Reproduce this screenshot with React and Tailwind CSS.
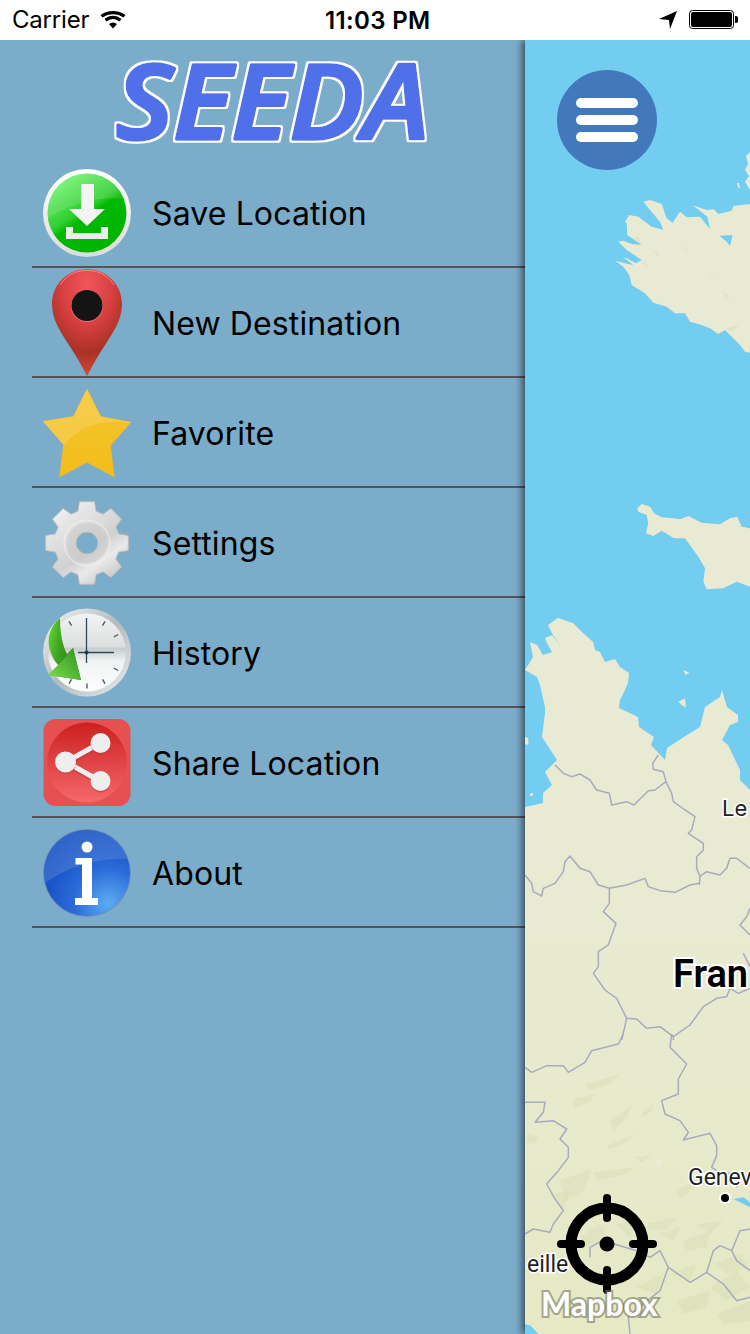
const SANS = "font-['Inter','Liberation_Sans',sans-serif]";

function SaveIcon() {
  return (
    <svg width="88" height="88" viewBox="0 0 88 88">
      <defs>
        <linearGradient id="saveRim" x1="0" y1="0" x2="0" y2="1"><stop offset="0" stopColor="#ffffff" /><stop offset="1" stopColor="#dcdcdc" /></linearGradient>
        <linearGradient id="saveFill" x1="0.15" y1="0.05" x2="0.7" y2="0.9"><stop offset="0" stopColor="#73f673" /><stop offset="0.5" stopColor="#2fce2f" /><stop offset="0.6" stopColor="#00b900" /><stop offset="1" stopColor="#00b400" /></linearGradient>
        <clipPath id="saveClip"><circle cx="44" cy="44" r="39.5" /></clipPath>
      </defs>
      <circle cx="44" cy="44" r="44" fill="url(#saveRim)" />
      <circle cx="44" cy="44" r="39.5" fill="url(#saveFill)" />
      <path d="M4 50 C22 38 50 26 84 30 L84 0 L4 0Z" fill="#ffffff" opacity="0.12" clipPath="url(#saveClip)" />
      <path d="M38 15 H51 V40 H62 L44 57 L26 40 H38Z" fill="#f4f4f4" />
      <path d="M23 58 H30 V64 H58 V58 H65 V70 H23Z" fill="#ececec" />
    </svg>
  );
}

function PinIcon() {
  return (
    <svg width="72" height="108" viewBox="-1 0 72 108">
      <defs>
        <radialGradient id="pinGlow" cx="0.5" cy="0.16" r="0.8"><stop offset="0" stopColor="#f2565c" /><stop offset="0.45" stopColor="#d83f40" /><stop offset="0.78" stopColor="#a93226" /><stop offset="1" stopColor="#cf4530" /></radialGradient>
      </defs>
      <path d="M35 0 C54 0 70 15 70 35 C70 50 62 62 55 73 C47 85 40 97 35 107 C30 97 23 85 15 73 C8 62 0 50 0 35 C0 15 16 0 35 0Z" fill="url(#pinGlow)" />
      <path d="M8 16 C16 4 26 1.500 35 1.500 C44 1.500 54 4 62 16" fill="none" stroke="#f7a0a0" strokeWidth="1" opacity="0.7" />
      <circle cx="35" cy="37" r="16" fill="#e8a0a0" opacity="0.6" />
      <circle cx="35" cy="36.500" r="15.500" fill="#141414" />
    </svg>
  );
}

function StarIcon() {
  const pts = "45,0 59,28 90,34 69,58 73,90 45,75 17,90 21,57 0,33 31,28";
  return (
    <svg width="90" height="90" viewBox="0 0 90 90">
      <defs>
        <linearGradient id="starFill" x1="0" y1="0" x2="0" y2="1"><stop offset="0" stopColor="#f6c62f" /><stop offset="1" stopColor="#f2bd1b" /></linearGradient>
        <clipPath id="starClip"><polygon points={pts} /></clipPath>
      </defs>
      <polygon points={pts} fill="url(#starFill)" stroke="#eeb92c" strokeWidth="0.6" />
      <path d="M0 0 H90 V35 C60 30 35 38 20 60 L0 60Z" fill="#f8dc8a" opacity="0.32" clipPath="url(#starClip)" />
    </svg>
  );
}

function GearIcon() {
  const parts = [];
  for (let i = 0; i < 8; i++) {
    const a = (i * Math.PI) / 4 - Math.PI / 2;
    const p = (r, d) => `${(43 + r * Math.cos(a + d)).toFixed(2)} ${(43 + r * Math.sin(a + d)).toFixed(2)}`;
    parts.push(`${i === 0 ? "M" : "L"}${p(33, -0.28)} L${p(42, -0.18)} L${p(42, 0.18)} L${p(33, 0.28)}`);
  }
  const d = `${parts.join(" ")} Z M43 32 A11 11 0 1 0 43 54 A11 11 0 1 0 43 32 Z`;
  return (
    <svg width="86" height="86" viewBox="0 0 86 86">
      <defs>
        <linearGradient id="gearFill" x1="0.1" y1="0" x2="0.8" y2="1"><stop offset="0" stopColor="#f4f4f4" /><stop offset="0.6" stopColor="#d0d0d0" /><stop offset="0.75" stopColor="#eaeaea" /><stop offset="1" stopColor="#c2c2c2" /></linearGradient>
      </defs>
      <path d={d} fill="url(#gearFill)" fillRule="evenodd" stroke="#bcbcbc" strokeWidth="1" strokeLinejoin="round" />
      <circle cx="43" cy="43" r="23" fill="none" stroke="#f2f2f2" strokeWidth="1" />
      <path d="M43 23 A20 20 0 0 1 63 43 A20 20 0 0 1 43 63 A20 20 0 0 1 23 43 A20 20 0 0 1 43 23 Z M43 32 A11 11 0 1 0 43 54 A11 11 0 1 0 43 32 Z" fill="#c8c8c8" fillRule="evenodd" opacity="0.55" />
    </svg>
  );
}

function ClockIcon() {
  const ticks = [30, 60, 120, 150, 180, 210, 240, 300, 330].map((deg) => {
    const a = (deg * Math.PI) / 180;
    return { x1: 44 + 31 * Math.sin(a), y1: 44 - 31 * Math.cos(a), x2: 44 + 36 * Math.sin(a), y2: 44 - 36 * Math.cos(a), k: deg };
  });
  return (
    <svg width="88" height="90" viewBox="0 0 88 90">
      <defs>
        <linearGradient id="clockRim" x1="0" y1="0" x2="1" y2="1"><stop offset="0" stopColor="#f7f7f7" /><stop offset="0.5" stopColor="#b4b9bb" /><stop offset="1" stopColor="#e6f0f4" /></linearGradient>
        <linearGradient id="clockFace" x1="0" y1="0" x2="0" y2="1"><stop offset="0" stopColor="#f3f4f4" /><stop offset="0.42" stopColor="#dcdfdf" /><stop offset="0.45" stopColor="#c8cdcd" /><stop offset="0.62" stopColor="#f2f4f4" /><stop offset="1" stopColor="#fdfdfd" /></linearGradient>
        <linearGradient id="clockArrow" x1="0" y1="0" x2="1" y2="0.35"><stop offset="0" stopColor="#63e032" /><stop offset="0.45" stopColor="#3fa322" /><stop offset="1" stopColor="#2c7a1a" /></linearGradient>
        <linearGradient id="clockHead" x1="0" y1="1" x2="1" y2="0"><stop offset="0" stopColor="#7be04c" /><stop offset="1" stopColor="#2f8f1f" /></linearGradient>
      </defs>
      <circle cx="44" cy="44.500" r="44" fill="url(#clockRim)" />
      <circle cx="44" cy="44.500" r="39" fill="url(#clockFace)" />
      {ticks.map((t) => (
        <line key={t.k} x1={t.x1} y1={t.y1 + 0.5} x2={t.x2} y2={t.y2 + 0.5} stroke="#3c5a6a" strokeWidth="1.300" />
      ))}
      <line x1="43.500" y1="10" x2="43.500" y2="55" stroke="#2d4a5c" strokeWidth="1.300" />
      <line x1="35" y1="44.500" x2="71" y2="44.500" stroke="#2d4a5c" strokeWidth="1.300" />
      <circle cx="43.500" cy="44.500" r="2" fill="#1d3a4c" />
      <path d="M17 10 C8 17 3 30 7 42 C9 49 12 54 16 58 L5 67 L38 72 L30 40 L24 46 C20 38 17 27 17 10Z" fill="url(#clockArrow)" />
      <path d="M5 67 L38 72 L30 40 L19 53Z" fill="url(#clockHead)" />
    </svg>
  );
}

function ShareIcon() {
  return (
    <svg width="88" height="88" viewBox="0 0 88 88">
      <defs>
        <linearGradient id="shareFill" x1="0" y1="0" x2="0" y2="1"><stop offset="0" stopColor="#cc2020" /><stop offset="1" stopColor="#f4686c" /></linearGradient>
      </defs>
      <rect x="0.500" y="0" width="87" height="87" rx="12" fill="#e65050" />
      <circle cx="44" cy="43.500" r="40" fill="url(#shareFill)" />
      <g stroke="#b83a3a" strokeWidth="6" opacity="0.5" transform="translate(0 1.500)">
        <line x1="23" y1="43" x2="57" y2="24" />
        <line x1="23" y1="43" x2="57" y2="62" />
      </g>
      <g stroke="#eeeeee" strokeWidth="5">
        <line x1="23" y1="43" x2="57" y2="24" />
        <line x1="23" y1="43" x2="57" y2="62" />
      </g>
      <g fill="#b83a3a" opacity="0.5" transform="translate(0 1.500)">
        <circle cx="57.500" cy="24" r="10" />
        <circle cx="22.500" cy="43" r="10.500" />
        <circle cx="57.500" cy="62" r="10" />
      </g>
      <g fill="#eeeeee">
        <circle cx="57.500" cy="24" r="10" />
        <circle cx="22.500" cy="43" r="10.500" />
        <circle cx="57.500" cy="62" r="10" />
      </g>
    </svg>
  );
}

function InfoIcon() {
  return (
    <svg width="88" height="88" viewBox="0 0 88 88">
      <defs>
        <radialGradient id="infoFill" cx="0.75" cy="0.85" r="0.9"><stop offset="0" stopColor="#5dacf2" /><stop offset="0.45" stopColor="#2b6bd8" /><stop offset="1" stopColor="#0f46bc" /></radialGradient>
        <clipPath id="infoClip"><circle cx="44" cy="44" r="43" /></clipPath>
      </defs>
      <circle cx="44" cy="44" r="44" fill="#6e8fc0" />
      <circle cx="44" cy="44" r="43" fill="url(#infoFill)" />
      <path d="M0 56 C22 38 55 28 88 30 L88 0 L0 0Z" fill="#5c8ad6" opacity="0.45" clipPath="url(#infoClip)" />
      <circle cx="44" cy="18" r="5.500" fill="#ffffff" />
      <path d="M32.500 29 H49 V69 H55 V76 H32 V69 H39 V35.500 H32.500Z" fill="#ffffff" />
    </svg>
  );
}

const rows = [
  { label: "Save Location", icon: <SaveIcon /> },
  { label: "New Destination", icon: <PinIcon /> },
  { label: "Favorite", icon: <StarIcon /> },
  { label: "Settings", icon: <GearIcon /> },
  { label: "History", icon: <ClockIcon /> },
  { label: "Share Location", icon: <ShareIcon /> },
  { label: "About", icon: <InfoIcon /> },
];

function MapArt() {
  const land = "#e9ead4";
  const border = "#a8abbe";
  const hills = [
    "225,150 330,120 300,150 240,170", "190,195 255,180 240,205 195,222", "300,260 365,215 350,250 310,290",
    "395,240 430,210 425,230 400,248", "290,335 380,300 340,330 300,345", "250,415 380,400 330,425 260,440",
    "150,440 245,405 220,470 170,500", "50,300 85,310 75,330 50,325", "370,370 425,365 395,385",
    "410,570 500,550 470,585 420,590", "500,470 570,430 540,470 510,495", "560,570 640,560 600,600",
    "520,620 600,590 590,640 530,650", "610,690 690,660 720,700 650,720", "480,720 560,690 540,740",
    "600,760 680,710 720,760 650,800", "500,800 600,770 590,820 520,840", "620,840 720,800 720,860 640,870",
    "210,610 270,570 290,600 230,640", "320,570 380,560 360,610", "120,480 180,470 160,530",
    "450,600 510,580 490,620", "380,760 460,720 440,780",
  ];
  return (
    <svg width="225" height="1294" viewBox="525 40 225 1294" className="block">
      <defs>
        <linearGradient id="landTone" gradientUnits="userSpaceOnUse" x1="0" y1="640" x2="0" y2="1334">
          <stop offset="0" stopColor="#e9ead4" />
          <stop offset="0.55" stopColor="#e8ead0" />
          <stop offset="1" stopColor="#e5e9c4" />
        </linearGradient>
      </defs>
      <rect x="525" y="40" width="225" height="1294" fill="#73cdf1" />
      <polygon points="750,152 746,156 748,164 745,170 749,176 745,182 750,190" fill={land} />
      <polygon points="737,183 739,183 740,189 738,187" fill={land} />

      <g transform="translate(510 180) scale(0.33333)">
        <polygon fill={land} points="400,65 420,60 455,72 470,115 488,128 510,95 530,112 570,110 590,135 600,148 592,110 548,76 590,90 612,88 625,102 665,92 670,78 720,72 720,518 705,515 690,495 645,450 625,462 600,445 575,435 540,425 525,400 495,400 470,380 430,368 405,340 365,315 358,285 340,260 316,242 345,250 370,255 340,232 350,235 378,250 395,240 350,210 325,185 340,182 365,192 395,195 352,165 350,130 345,125 358,105 385,110 425,140 460,150 450,125 420,90" />
        <polygon fill="#73cdf1" points="628,167 668,165 660,198 650,185" />
        <polygon fill="#e0e3c4" points="370,175 390,170 390,190" />
        <polygon fill="#e0e3c4" points="430,213 447,215 447,232" />
        <polygon fill="#e0e3c4" points="395,240 418,262 400,255" />
        <polygon fill="#e3e6c6" points="630,335 650,338 660,362" />
        <polygon fill="#e0e3c4" points="645,445 688,435 665,455" />
        <polygon fill="#e5e8c9" points="515,195 540,205 525,218" />
        <polygon fill="#e5e8c9" points="590,285 615,290 605,302" />
        <polygon fill={land} points="382,985 395,972 420,980 432,1000 455,1012 490,1015 510,1018 535,1008 575,1028 630,1033 660,1015 682,1010 695,1040 720,1045 720,1220 680,1205 640,1225 590,1228 580,1205 585,1165 565,1130 525,1075 492,1075 455,1052 430,1068 408,1060 415,1030 410,1005 385,995" />
      </g>

      <g transform="translate(510 620) scale(0.33333)">
        <polygon fill="url(#landTone)" transform="translate(-1530 -1860) scale(3)" points="525,670 530,662 533,657 530,642 537,645 543,655 552,652 547,643 545,638 552,635 560,645 553,635 548,625 558,618 573,623 583,633 593,642 595,650 600,652 605,662 615,659 620,667 629,673 628,683 625,690 620,700 619,708 638,717 639,727 654,737 651,745 665,760 667,748 687,735 700,727 705,707 720,697 722,690 727,707 738,715 738,722 730,725 722,740 728,745 740,770 740,780 750,790 750,1334 525,1334 525,807 543,803 543,793 552,785 545,772 555,762 557,760 542,737 545,713 545,707 540,685 537,677" />
        <polygon fill={land} points="515,240 525,235 528,262 518,258 505,245" />
        <polygon fill={land} points="520,150 538,158 526,165" />
        <polygon fill={land} points="45,350 55,355 55,375 45,372" />
        <polygon fill={land} points="60,520 70,520 68,528 60,527" />
        <g fill="none" stroke={border} strokeWidth="4.500" strokeLinejoin="round">
          <polyline points="135,435 160,460 185,470 210,462 240,480 260,510 298,520 305,555 350,545 372,555 415,512 435,510 468,485 460,455 430,448 428,430 445,405" />
          <polyline points="468,485 485,520 490,545 525,570 555,590 545,630 535,640 580,670 580,690 560,710 560,745 570,770 568,795" />
          <polyline points="568,770 590,755 630,765 650,745 660,715 680,715 720,745" />
          <polyline points="45,765 65,790 70,815 95,828 100,805 135,790 160,755 165,725 180,708 210,745 240,755 265,795 298,805 350,795 405,775 415,800 450,812 495,817 540,795 568,790" />
          <polyline points="298,805 298,850 280,875 318,910 295,975 265,995 265,1040 250,1060 285,1110 320,1135 350,1195 380,1197 410,1225 450,1220 490,1250 540,1215 580,1160 620,1135 650,1130 660,1105 685,1120 720,1105" />
          <polyline points="350,1195 335,1260" />
          <polyline points="490,1250 490,1260" />
          <polyline points="720,865 710,890 690,915 720,945" />
          <polyline points="700,1000 720,1040" />
        </g>
      </g>

      <g transform="translate(510 1034) scale(0.33333)">
        {hills.map((p) => (
          <polygon key={p} points={p} fill="#d6dcb2" opacity="0.42" />
        ))}
        <polygon fill="#f0ecdc" opacity="0.6" points="430,380 460,375 450,400" />
        <polygon fill="#73cdf1" points="45,870 62,875 85,900 45,900" />
        <polygon fill="#73cdf1" points="670,495 700,490 720,505 720,520 690,505" />
        <g fill="none" stroke={border} strokeWidth="4.500" strokeLinejoin="round">
          <polyline points="340,0 325,30 245,50 225,85 175,115 160,95 110,95 65,115 45,100" />
          <polyline points="45,205 105,205 100,235 75,265 130,260 170,285 150,315 175,340 175,370 145,410 110,450 135,495 160,530 130,570 120,595 70,585 45,600" />
          <polyline points="485,0 480,40 530,90 505,135 505,180 455,200 465,240 510,260 535,295 520,318 600,298 620,335 620,365 605,400 630,415 685,420 680,460" />
          <polyline points="420,670 450,650 470,690 475,700 450,770 400,810 355,850 360,900" />
          <polyline points="475,700 540,745 590,715 610,650 630,635 665,650 690,590 720,585" />
          <polyline points="665,650 680,680 720,710" />
          <polyline points="590,715 640,750 680,800 720,790" />
          <polyline points="240,670 240,640 275,620 330,635 380,650 420,670" />
        </g>
      </g>
    </svg>
  );
}

function TargetIcon() {
  return (
    <svg width="100" height="100" viewBox="0 0 100 100">
      <circle cx="50" cy="50" r="36" fill="none" stroke="#000" strokeWidth="11" />
      <circle cx="50" cy="50" r="7.500" fill="#000" />
      <g stroke="#000" strokeWidth="8" strokeLinecap="round">
        <line x1="50" y1="4" x2="50" y2="24" />
        <line x1="50" y1="76" x2="50" y2="96" />
        <line x1="4" y1="50" x2="24" y2="50" />
        <line x1="76" y1="50" x2="96" y2="50" />
      </g>
    </svg>
  );
}

export default function App() {
  return (
    <div className={`w-[750px] h-[1334px] flex flex-col overflow-hidden bg-white ${SANS}`}>
      <div className="h-[40px] shrink-0 flex items-center justify-between bg-white text-black relative z-20">
        <div className="flex items-center pl-[12px]">
          <span className="text-[24px] leading-none tracking-[-0.2px]">Carrier</span>
          <svg width="26" height="18" viewBox="0 0 26 18" className="ml-[11px]">
            <path d="M13 17.500 L9 13 C11.500 11 14.500 11 17 13Z M6.500 10.500 L4.500 8 C9.500 3.500 16.500 3.500 21.500 8 L19.500 10.500 C15.500 7 10.500 7 6.500 10.500Z M2.500 6.500 L0.500 4 C7.500 -1.300 18.500 -1.300 25.500 4 L23.500 6.500 C17.500 2 8.500 2 2.500 6.500Z" fill="#000" />
          </svg>
        </div>
        <span className="absolute left-[325px] top-[8px] text-[24px] leading-[26px] font-semibold tracking-[0.35px]">11:03 PM</span>
        <div className="flex items-center pr-[11px]">
          <svg width="18" height="18" viewBox="0 0 18 18">
            <path d="M0 8 L18 0 L11 18 L10 9 Z" fill="#000" />
          </svg>
          <svg width="50" height="20" viewBox="0 0 50 20" className="ml-[12px]">
            <rect x="0.500" y="0.500" width="44" height="18" rx="3" fill="none" stroke="#000" strokeWidth="1" />
            <rect x="2" y="2" width="41" height="15" rx="2" fill="#000" />
            <path d="M46 6 H47 C48.500 6 49 7 49 8 V11 C49 12 48.500 13 47 13 H46Z" fill="#000" />
          </svg>
        </div>
      </div>

      <div className="flex-1 flex min-h-0">
        <div className="w-[525px] shrink-0 bg-[#7badca] flex flex-col">
          <div className="h-[118px] shrink-0">
            <svg width="525" height="118" viewBox="0 0 525 118" className="block overflow-visible">
              <defs>
                <filter id="logoHalo" x="-5%" y="-10%" width="110%" height="120%">
                  <feMorphology in="SourceAlpha" operator="dilate" radius="1.600" result="grown" />
                  <feFlood floodColor="#ffffff" />
                  <feComposite in2="grown" operator="in" result="halo" />
                  <feMerge>
                    <feMergeNode in="halo" />
                    <feMergeNode in="SourceGraphic" />
                  </feMerge>
                </filter>
              </defs>
              <text x="116" y="98.500" textLength="313" lengthAdjust="spacingAndGlyphs" fontFamily="'Open Sans','Noto Sans',sans-serif" fontStyle="italic" fontWeight="600" fontSize="103" fill="#5070e8" stroke="#5070e8" strokeWidth="3.500" strokeLinejoin="round" filter="url(#logoHalo)">SEEDA</text>
            </svg>
          </div>
          <div className="pl-[32px] flex flex-col">
            {rows.map((r) => (
              <div key={r.label} className="h-[110px] border-b-2 border-[#555555] flex items-center pt-[1px]">
                <div className="w-[110px] pl-[11px] pr-[11px] flex justify-center shrink-0">{r.icon}</div>
                <span className="ml-[10px] mt-[2px] text-[32px] leading-none tracking-[0.12px] text-black">{r.label}</span>
              </div>
            ))}
          </div>
        </div>

        <div className="relative z-10 w-[225px] shrink-0 overflow-hidden shadow-[-3px_0_7px_rgba(0,0,0,0.55)]">
          <MapArt />
          <span className="absolute left-[197px] top-[755px] text-[22px] leading-[26px] text-[#222] [paint-order:stroke_fill] [-webkit-text-stroke:3px_white]">Le</span>
          <span className="absolute left-[148px] top-[912px] text-[38px] leading-[44px] font-semibold text-black font-['Roboto',sans-serif] [paint-order:stroke_fill] [-webkit-text-stroke:4px_white]">Fran</span>
          <span className="absolute left-[163px] top-[1125px] text-[23px] leading-[26px] text-[#222] font-['Roboto',sans-serif] [paint-order:stroke_fill] [-webkit-text-stroke:3px_white]">Genev</span>
          <span className="absolute left-[2px] top-[1212px] text-[23px] leading-[26px] text-[#222] font-['Roboto',sans-serif] [paint-order:stroke_fill] [-webkit-text-stroke:3px_white]">eille</span>
          <div className="absolute left-[194px] top-[1152px] w-[12px] h-[12px] rounded-full bg-black border-2 border-white" />

          <div className="absolute left-[32px] top-[30px] w-[100px] h-[100px] rounded-full bg-[#4278bc] flex flex-col items-center justify-center gap-[7px]">
            <div className="w-[62px] h-[10px] rounded-full bg-white" />
            <div className="w-[62px] h-[10px] rounded-full bg-white" />
            <div className="w-[62px] h-[10px] rounded-full bg-white" />
          </div>

          <div className="absolute left-[32px] top-[1154px]"><TargetIcon /></div>
          <span className="absolute left-[16px] top-[1245px] text-[32px] leading-[38px] font-bold text-white font-['Lato',sans-serif] [paint-order:stroke_fill] [-webkit-text-stroke:4px_rgba(120,120,100,0.6)]">Mapbox</span>
        </div>
      </div>
    </div>
  );
}
